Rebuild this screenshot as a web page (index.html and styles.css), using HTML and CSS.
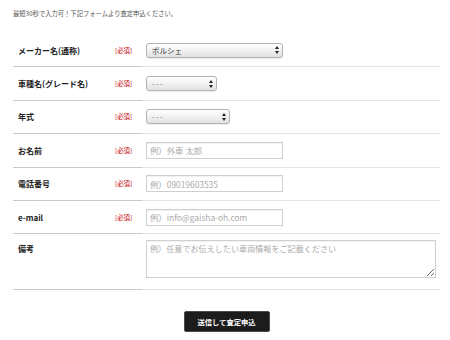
FILE: index.html
```html
<!DOCTYPE html>
<html lang="ja">
<head>
    <meta charset="UTF-8">
    <meta name="viewport" content="width=device-width, initial-scale=1.0">
    <title>査定申込フォーム</title>
    <link rel="stylesheet" href="styles.css">
</head>
<body>
    <div class="form-page">
        <p class="intro">最短30秒で入力可！下記フォームより査定申込ください。</p>

        <form class="assess-form">
            <!-- メーカー -->
            <div class="row">
                <div class="label-cell"><span class="label">メーカー名(通称)</span><span class="required">[必須]</span></div>
                <div class="field-cell">
                    <span class="select select-maker">
                        <select>
                            <option>ポルシェ</option>
                        </select>
                        <svg class="arrows" width="4" height="8" viewBox="0 0 4 8"><path d="M2 0 L4 3 L0 3 Z M0 5 L4 5 L2 8 Z" fill="#222"/></svg>
                    </span>
                </div>
            </div>

            <!-- 車種 -->
            <div class="row">
                <div class="label-cell"><span class="label">車種名(グレード名)</span><span class="required">[必須]</span></div>
                <div class="field-cell">
                    <span class="select select-model">
                        <select class="empty">
                            <option>---</option>
                        </select>
                        <svg class="arrows" width="4" height="8" viewBox="0 0 4 8"><path d="M2 0 L4 3 L0 3 Z M0 5 L4 5 L2 8 Z" fill="#222"/></svg>
                    </span>
                </div>
            </div>

            <!-- 年式 -->
            <div class="row">
                <div class="label-cell"><span class="label">年式</span><span class="required">[必須]</span></div>
                <div class="field-cell">
                    <span class="select select-year">
                        <select class="empty">
                            <option>---</option>
                        </select>
                        <svg class="arrows" width="4" height="8" viewBox="0 0 4 8"><path d="M2 0 L4 3 L0 3 Z M0 5 L4 5 L2 8 Z" fill="#222"/></svg>
                    </span>
                </div>
            </div>

            <!-- お名前 -->
            <div class="row">
                <div class="label-cell"><span class="label">お名前</span><span class="required">[必須]</span></div>
                <div class="field-cell">
                    <input type="text" placeholder="例）外車 太郎">
                </div>
            </div>

            <!-- 電話番号 -->
            <div class="row">
                <div class="label-cell"><span class="label">電話番号</span><span class="required">[必須]</span></div>
                <div class="field-cell">
                    <input type="text" placeholder="例）09019603535">
                </div>
            </div>

            <!-- e-mail -->
            <div class="row">
                <div class="label-cell"><span class="label">e-mail</span><span class="required">[必須]</span></div>
                <div class="field-cell">
                    <input type="text" placeholder="例）info@gaisha-oh.com">
                </div>
            </div>

            <!-- 備考 -->
            <div class="row row-note">
                <div class="label-cell"><span class="label">備考</span></div>
                <div class="field-cell">
                    <textarea placeholder="例）任意でお伝えしたい車両情報をご記載ください"></textarea>
                </div>
            </div>

            <div class="submit-area">
                <button type="button">送信して査定申込</button>
            </div>
        </form>
    </div>
</body>
</html>
```

FILE: styles.css
```css
body {
    margin: 0;
    background: #fff;
    color: #222;
    font-family: "Noto Sans CJK JP", "Noto Sans", sans-serif;
}

.form-page {
    width: 427px;
    padding-left: 13px;
}

.intro {
    margin: 0;
    padding-top: 10px;
    height: 24px;
    font-size: 6.3px;
    line-height: 8px;
    color: #555;
}

.row {
    display: flex;
}

.label-cell {
    width: 124px;
    height: 32.4px;
    padding-left: 5px;
    display: flex;
    align-items: center;
    border-bottom: 1px solid #c9c9c9;
}

.label {
    flex: 1;
    font-size: 8px;
    font-weight: bold;
    color: #222;
}

.required {
    width: 27px;
    font-size: 6.4px;
    color: #c40000;
}

.field-cell {
    flex: 1;
    height: 32.4px;
    padding-left: 4px;
    display: flex;
    align-items: center;
    border-bottom: 1px solid #e4e4e4;
}

.row-note .label-cell,
.row-note .field-cell {
    align-items: flex-start;
}

.row-note .label-cell {
    height: 46px;
    padding-top: 9px;
}

.row-note .field-cell {
    height: 49px;
    padding-top: 6px;
}

.select {
    position: relative;
    display: flex;
    height: 15px;
}

.select-maker { width: 137px; }
.select-model { width: 71px; }
.select-year { width: 84px; }

.select select {
    -webkit-appearance: none;
    appearance: none;
    display: block;
    width: 100%;
    height: 100%;
    margin: 0;
    padding: 0 10px 0 5px;
    border: 1px solid #b3b3b3;
    border-radius: 3px;
    background: linear-gradient(#ffffff, #f1f1f1 50%, #e2e2e2);
    box-shadow: 0 1px 1px rgba(0, 0, 0, 0.08);
    font-family: inherit;
    font-size: 7.5px;
    color: #333;
}

.select select.empty {
    color: #888;
    font-size: 8px;
    letter-spacing: 1.2px;
}

.select .arrows {
    position: absolute;
    right: 4px;
    top: 3.5px;
}

input[type="text"] {
    width: 137px;
    height: 17px;
    margin: 0;
    padding: 0 3px;
    box-sizing: border-box;
    border: 1px solid #cfcfcf;
    box-shadow: inset 0 1px 1px rgba(0, 0, 0, 0.06);
    font-family: inherit;
    font-size: 8.4px;
    color: #333;
}

textarea {
    display: block;
    width: 290px;
    height: 38px;
    margin: 0;
    padding: 2px 3px;
    box-sizing: border-box;
    border: 1px solid #cfcfcf;
    box-shadow: inset 0 1px 1px rgba(0, 0, 0, 0.06);
    font-family: inherit;
    font-size: 8.1px;
    color: #333;
}

input::placeholder,
textarea::placeholder {
    color: #aaa;
}

.submit-area {
    display: flex;
    justify-content: center;
    padding-top: 21px;
}

button {
    width: 86px;
    height: 21px;
    background: #1c1c1c;
    border: 1px solid #4a4a4a;
    border-radius: 2px;
    color: #fff;
    font-family: inherit;
    font-size: 7.3px;
    font-weight: bold;
    cursor: pointer;
}
```
